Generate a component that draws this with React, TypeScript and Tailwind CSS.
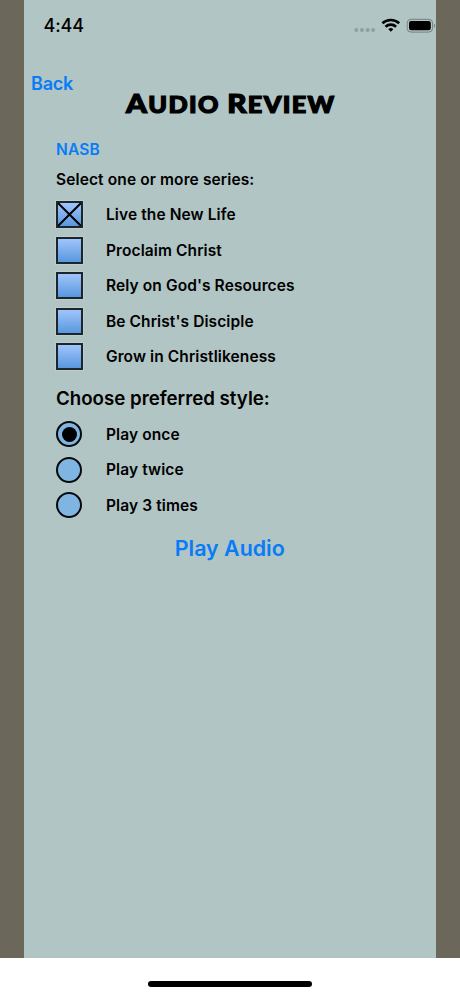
import { useState } from 'react'

const SERIES = [
  'Live the New Life',
  'Proclaim Christ',
  "Rely on God's Resources",
  "Be Christ's Disciple",
  'Grow in Christlikeness',
]

const STYLES = ['Play once', 'Play twice', 'Play 3 times']

function StatusBar() {
  return (
    <div className="flex h-[51px] items-center justify-between pl-5">
      <span className="text-[18px] font-medium leading-none tracking-[-0.1px]">4:44</span>
      <svg width="82" height="20" viewBox="0 0 82 20" fill="none">
        <g fill="#8fa09f">
          <circle cx="2.3" cy="13.9" r="2" />
          <circle cx="8" cy="13.9" r="2" />
          <circle cx="13.7" cy="13.9" r="2" />
          <circle cx="19.1" cy="13.9" r="2" />
        </g>
        <g stroke="#000" strokeWidth="2.6">
          <path d="M28.4 7.3a12.2 12.2 0 0 1 16.8 0" />
          <path d="M31.5 10.7a7.7 7.7 0 0 1 10.6 0" />
        </g>
        <path d="M36.8 15.8l-2.5-2.5a3.5 3.5 0 0 1 5 0z" fill="#000" />
        <rect x="53.2" y="3.3" width="25.4" height="12.8" rx="3.8" stroke="#738180" />
        <rect x="55" y="5.1" width="21.8" height="9.2" rx="2.2" fill="#000" />
        <path d="M80 7.7c1.5.6 1.5 3.4 0 4z" fill="#738180" />
      </svg>
    </div>
  )
}

function Checkbox({ checked }: { checked: boolean }) {
  return (
    <span className="flex size-[27px] shrink-0 border-2 border-[#1a252e] bg-linear-to-b from-[#a0c4fb] to-[#5798de] outline outline-[#bfccc8]">
      {checked && (
        <svg viewBox="0 0 23 23" className="size-full" stroke="#000" strokeWidth="2">
          <path d="M0 0l23 23M23 0L0 23" />
        </svg>
      )}
    </span>
  )
}

function Radio({ checked }: { checked: boolean }) {
  return (
    <span className="flex size-[26px] shrink-0 items-center justify-center rounded-full border-2 border-[#05090c] bg-[#80b5e1]">
      {checked && <span className="size-[15px] rounded-full bg-black" />}
    </span>
  )
}

export default function App() {
  const [selected, setSelected] = useState<number[]>([0])
  const [style, setStyle] = useState(0)

  const toggle = (i: number) => {
    setSelected((prev) => (prev.includes(i) ? prev.filter((n) => n !== i) : [...prev, i]))
  }

  return (
    <div className="flex h-[996px] w-[460px] flex-col bg-white font-['Inter',sans-serif] text-black">
      <div className="h-[958px] bg-[#6b675b] pl-[23.5px] pr-6">
        <main className="h-full bg-[#b1c5c4]">
          <StatusBar />

          <header className="flex h-[88px] items-start pl-[7.5px] pt-[21px]">
            <button className="w-[95px] text-left text-[18px] font-semibold leading-6 tracking-[-0.2px] text-[#087bf7]">
              Back
            </button>
            <h1 className="origin-left scale-x-[1.145] whitespace-nowrap pt-[15px] font-['Lato',sans-serif] text-[22px] font-black leading-8 tracking-[1.2px] [-webkit-text-stroke:1.2px_black]">
              <span className="text-[26px]">A</span>UDIO <span className="text-[26px]">R</span>EVIEW
            </h1>
          </header>

          <section className="flex flex-col items-start pl-[32.5px] pt-px">
            <button className="text-[15.5px] font-semibold leading-5 tracking-[0.2px] text-[#087bf7]">NASB</button>
            <h2 className="mt-[10px] text-[15.5px] font-semibold leading-5 tracking-[0.12px]">
              Select one or more series:
            </h2>

            <div className="mt-[7px]">
              {SERIES.map((name, i) => (
                <button
                  key={name}
                  onClick={() => toggle(i)}
                  className="flex h-[35.5px] items-center gap-[23px] whitespace-nowrap text-[15.5px] font-semibold tracking-[0.1px]"
                >
                  <Checkbox checked={selected.includes(i)} />
                  {name}
                </button>
              ))}
            </div>

            <h2 className="mt-[12px] text-[18.7px] font-semibold leading-6">Choose preferred style:</h2>

            <div className="mt-[6px]">
              {STYLES.map((name, i) => (
                <button
                  key={name}
                  onClick={() => setStyle(i)}
                  className="flex h-[35.5px] items-center gap-[24px] whitespace-nowrap text-[15.5px] font-semibold tracking-[0.1px]"
                >
                  <Radio checked={style === i} />
                  {name}
                </button>
              ))}
            </div>
          </section>

          <div className="mt-[11px] flex justify-center">
            <button className="text-[21.4px] font-semibold leading-7 text-[#087bf7]">Play Audio</button>
          </div>
        </main>
      </div>

      <div className="flex h-[38px] justify-center pt-[23px]">
        <div className="h-[6px] w-[164px] rounded-full bg-black" />
      </div>
    </div>
  )
}
